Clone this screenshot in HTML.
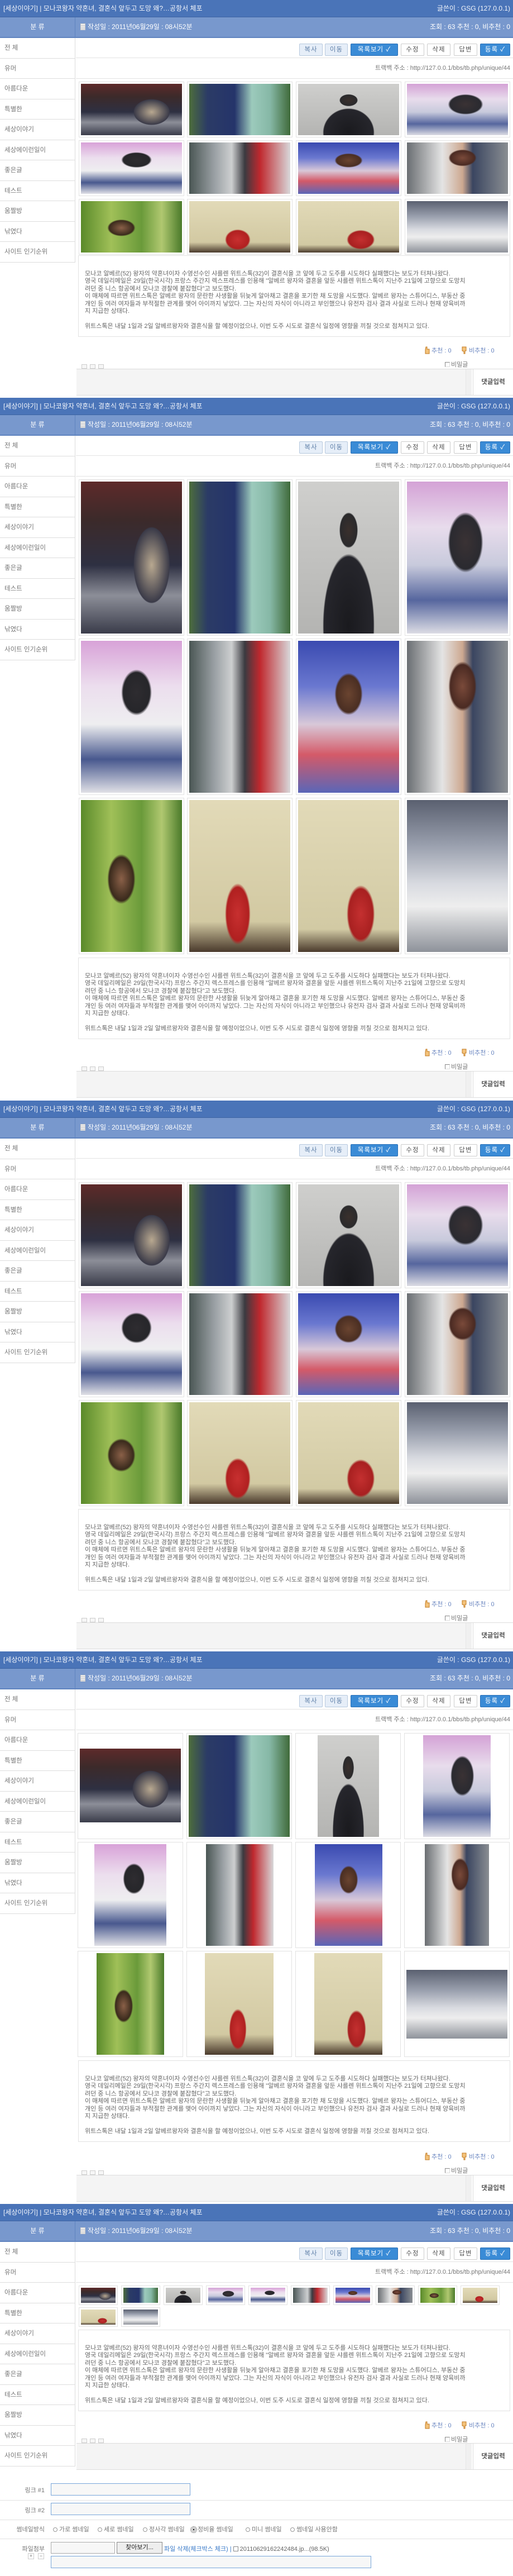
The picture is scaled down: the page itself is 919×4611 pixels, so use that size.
<!DOCTYPE html>
<html><head><meta charset="utf-8">
<style>
*{margin:0;padding:0;box-sizing:border-box}
body{width:919px;height:4611px;background:#fff;font-family:"Liberation Sans","Noto Sans CJK KR",sans-serif;overflow:hidden;position:relative}
.blk{position:absolute;left:0;width:919px}
.tt{position:absolute;left:0;top:0;width:919px;height:31px;background:#4a74b8;border-bottom:1px solid #3d64a3;color:#f2f5fb;font-size:12px;line-height:30px;padding:0 6px}
.tt .r{position:absolute;right:5px;top:0}
.sh{position:absolute;left:0;top:31px;width:919px;height:37px;background:#7898cd;border-bottom:2px solid #5f83bf;color:#fff;font-size:12px;line-height:35px}
.sh .sc{position:absolute;left:0;top:0;width:135px;text-align:center;border-right:1px solid #5f83bf;height:35px}
.sh .si{position:absolute;left:144px;top:0}
.sh .r{position:absolute;right:5px;top:0}
.doc{display:inline-block;width:9px;height:12px;background:#f3f3f3;border:1px solid #ccc;vertical-align:-2px;margin-right:4px;background-image:repeating-linear-gradient(#f3f3f3 0 2px,#bbb 2px 3px)}
.side{position:absolute;left:0;top:68px;width:135px;border-right:1px solid #ddd}
.side div{height:36.5px;border-bottom:1px solid #ddd;color:#777;font-size:11.5px;line-height:36px;padding-left:8px}
.btns{position:absolute;left:136px;top:68px;width:783px;height:36px;border-bottom:1px solid #e3e3e3}
.b{position:absolute;top:10px;height:22px;font-size:11.5px;line-height:20px;text-align:center;border:1px solid #ccc;background:#fff;color:#555;border-radius:2px;letter-spacing:1px}
.b.lb{background:#e6eef8;border-color:#b7c9de;color:#5f7fa8}
.b.bl{background:#3a8bd6;border-color:#2a70b6;color:#fff}
.tb{position:absolute;left:136px;top:104px;width:783px;height:37px;border-bottom:1px solid #e3e3e3;color:#777;font-size:11px;line-height:37px;text-align:right;padding-right:5px}
.bx{position:absolute;width:189px;border:1px solid #e2e2e2;background:#fff}
.bx i{position:absolute;left:3px;top:3px;right:3px;bottom:3px;display:block}
.sm{position:absolute;width:70px;height:35px;border:1px solid #e2e2e2;background:#fff}
.sm i{position:absolute;left:3px;top:3px;right:3px;bottom:3px;display:block}
.i1{background:radial-gradient(ellipse 25% 35% at 70% 55%,#b8a890 0%,#3a3a48 70%,transparent 72%),linear-gradient(180deg,#5e2a2a 0%,#3c2a2a 25%,#2e3042 55%,#8c8e98 75%,#3a3c4a 100%)}
.i2{background:linear-gradient(90deg,#4d6d3c 0%,#2b3b66 18%,#25346a 45%,#9ccabc 62%,#86b8a6 80%,#3f6a3a 100%)}
.i3{background:radial-gradient(ellipse 35% 65% at 50% 95%,#1a1a1e 0%,#26262c 70%,transparent 73%),radial-gradient(ellipse 14% 18% at 50% 32%,#3a302c 0%,#2a2a2c 60%,transparent 65%),linear-gradient(#cfcfcd,#b4b4b2)}
.i4{background:radial-gradient(ellipse 28% 32% at 58% 40%,#3a3234 0%,#2a2a30 55%,transparent 62%),linear-gradient(180deg,#d4a2d6 0%,#e8dcec 30%,#c8cadc 55%,#56669e 78%,#dcdce4 100%)}
.i5{background:radial-gradient(ellipse 24% 24% at 55% 34%,#2e2c30 0%,#26262a 55%,transparent 63%),linear-gradient(180deg,#d8a2d8 0%,#ecdeee 30%,#eeeef0 55%,#48588e 78%,#e0e0e6 100%)}
.i6{background:linear-gradient(90deg,#4a5654 0%,#9aa0a4 25%,#cdcfd0 42%,#3a3a40 55%,#c0282e 70%,#d8d8da 100%)}
.i7{background:radial-gradient(ellipse 22% 22% at 50% 35%,#6a4430 0%,#4a2e22 55%,transparent 63%),linear-gradient(180deg,#3a4ab0 0%,#6a78d0 30%,#d8c8d8 55%,#d45a68 75%,#5a66b8 100%)}
.i8{background:radial-gradient(ellipse 22% 26% at 55% 30%,#7a4a3a 0%,#4a2a22 55%,transparent 63%),linear-gradient(90deg,#6a6e72 0%,#e4e4e4 35%,#cda890 55%,#3a4560 65%,#8a8e92 100%)}
.i9{background:radial-gradient(ellipse 22% 26% at 40% 52%,#8a6048 0%,#3a2a1c 55%,transparent 63%),linear-gradient(90deg,#5a8a2a 0%,#a0c058 30%,#6a9a3a 60%,#b0c870 80%,#4a7a2a 100%)}
.i10{background:radial-gradient(ellipse 20% 32% at 48% 75%,#c83030 0%,#b02020 55%,transparent 63%),linear-gradient(180deg,#e2dab8,#d2c9a2 80%,#4a3a2c 100%)}
.i11{background:radial-gradient(ellipse 22% 30% at 62% 75%,#c43030 0%,#a82020 55%,transparent 63%),linear-gradient(180deg,#e2dab8,#d2caa4 85%,#4a3a2c 100%)}
.i12{background:linear-gradient(180deg,#5a6070 0%,#9aa0ae 30%,#d8dae0 55%,#eeeeee 70%,#8e929a 100%)}
.tx{position:absolute;left:140px;width:774px;height:146px;border:1px solid #e2e2e2;background:#fff;color:#666;font-size:11px;line-height:13.4px;padding:26px 0 0 11px;white-space:nowrap}
.rc{position:absolute;left:760px;font-size:11px;color:#6a86c0;white-space:nowrap}
.ar{position:absolute;left:146px;width:48px;height:8px}
.ar span{display:inline-block;width:10px;height:8px;border:1px solid #ccc;margin-right:5px;background:#f6f6f6}
.pw{position:absolute;left:797px;font-size:11px;color:#777}
.pw b{display:inline-block;width:9px;height:9px;border:1px solid #888;border-right-color:#ddd;border-bottom-color:#ddd;vertical-align:-1px;margin-right:2px}
.cm{position:absolute;left:137px;width:782px;height:48px;border-top:1px solid #ddd;border-bottom:1px solid #ddd}
.cm .ta{position:absolute;left:0;top:0;width:708px;height:46px;background:#f4f4f4;border-right:1px solid #ddd}
.cm .sb{position:absolute;left:697px;top:0;width:11px;height:46px;background:#f0f0f0;border-left:1px solid #e6e6e6}
.cm .go{position:absolute;left:710px;top:0;width:72px;height:46px;background:#fff;border-left:1px solid #ddd;font-size:11.5px;font-weight:bold;color:#555;text-align:center;line-height:46px}
.lbl{position:absolute;font-size:11px;color:#777;text-align:right;width:80px;left:0}
.in{position:absolute;border:1px solid #78a6da;background:#f7f7f7}
.hl{position:absolute;left:0;width:919px;height:1px;background:#e2e2e2}
.rd{position:absolute;font-size:11px;color:#777;white-space:nowrap}
.rd b{display:inline-block;width:8px;height:8px;border:1px solid #999;border-radius:50%;margin-right:3px;vertical-align:-1px}
</style></head><body>

<!-- ============ BLOCK 1 ============ -->
<div class="blk" style="top:0;height:712px">
<div class="tt">[세상이야기] | 모나코왕자 약혼녀, 결혼식 앞두고 도망 왜?…공항서 체포<span class="r">글쓴이 : GSG (127.0.0.1)</span></div>
<div class="sh"><div class="sc">분 류</div><div class="si"><i class="doc"></i>작성일 : 2011년06월29일 : 08시52분</div><div class="r">조회 : 63 추천 : 0, 비추천 : 0</div></div>
<div class="side"><div>전 체</div><div>유머</div><div>아름다운</div><div>특별한</div><div>세상이야기</div><div>세상에이런일이</div><div>좋은글</div><div>테스트</div><div>움짤방</div><div>낚였다</div><div>사이트 인기순위</div></div>
<div class="btns"><div class="b lb" style="left:400px;width:42px">복사</div><div class="b lb" style="left:446px;width:41px">이동</div><div class="b bl" style="left:492px;width:85px">목록보기 ✓</div><div class="b" style="left:582px;width:42px">수정</div><div class="b" style="left:629px;width:42px">삭제</div><div class="b" style="left:677px;width:42px">답변</div><div class="b bl" style="left:724px;width:54px">등록 ✓</div></div>
<div class="tb">트랙백 주소 : http://127.0.0.1/bbs/tb.php/unique/44</div>
<div class="bx" style="left:141px;top:146px;height:100px"><i class="i1"></i></div>
<div class="bx" style="left:335px;top:146px;height:100px"><i class="i2"></i></div>
<div class="bx" style="left:530px;top:146px;height:100px"><i class="i3"></i></div>
<div class="bx" style="left:725px;top:146px;height:100px"><i class="i4"></i></div>
<div class="bx" style="left:141px;top:251px;height:100px"><i class="i5"></i></div>
<div class="bx" style="left:335px;top:251px;height:100px"><i class="i6"></i></div>
<div class="bx" style="left:530px;top:251px;height:100px"><i class="i7"></i></div>
<div class="bx" style="left:725px;top:251px;height:100px"><i class="i8"></i></div>
<div class="bx" style="left:141px;top:356px;height:100px"><i class="i9"></i></div>
<div class="bx" style="left:335px;top:356px;height:100px"><i class="i10"></i></div>
<div class="bx" style="left:530px;top:356px;height:100px"><i class="i11"></i></div>
<div class="bx" style="left:725px;top:356px;height:100px"><i class="i12"></i></div>
<div class="tx" style="top:457px">모나코 알베르(52) 왕자의 약혼녀이자 수영선수인 샤를렌 위트스톡(32)이 결혼식을 코 앞에 두고 도주를 시도하다 실패했다는 보도가 터져나왔다.<br>영국 데일리메일은 29일(한국시각) 프랑스 주간지 렉스프레스를 인용해 "알베르 왕자와 결혼을 앞둔 샤를렌 위트스톡이 지난주 21일에 고향으로 도망치<br>려던 중 니스 항공에서 모나코 경찰에 붙잡혔다"고 보도했다.<br>이 매체에 따르면 위트스톡은 알베르 왕자의 문란한 사생활을 뒤늦게 알아채고 결혼을 포기한 채 도망을 시도했다. 알베르 왕자는 스튜어디스, 부동산 중<br>개인 등 여러 여자들과 부적절한 관계를 맺어 아이까지 낳았다. 그는 자신의 자식이 아니라고 부인했으나 유전자 검사 결과 사실로 드러나 현재 양육비까<br>지 지급한 상태다.<br><br>위트스톡은 내달 1일과 2일 알베르왕자와 결혼식을 할 예정이었으나, 이번 도주 시도로 결혼식 일정에 영향을 끼칠 것으로 점쳐지고 있다.</div>
<div class="rc" style="top:619px"><svg width="10" height="14" viewBox="0 0 10 14" style="vertical-align:-3px"><path d="M3 1 L5 1 L5 5 L9 5 L9 13 L2 13 L2 6 Z" fill="#f3c27a" stroke="#c07820"/></svg> 추천 : 0 &nbsp;&nbsp;&nbsp;&nbsp; <svg width="10" height="14" viewBox="0 0 10 14" style="vertical-align:-3px"><path d="M1 1 L8 1 L8 8 L6 8 L6 13 L4 13 L4 9 L1 8 Z" fill="#f3c27a" stroke="#c07820"/></svg> 비추천 : 0</div>
<div class="ar" style="top:647px"><span></span><span></span><span></span></div>
<div class="pw" style="top:644px"><b></b>비밀글</div>
<div class="cm" style="top:660px"><div class="ta"></div><div class="sb"></div><div class="go">댓글입력</div></div>
</div>

<!-- ============ BLOCK 2 ============ -->
<div class="blk" style="top:712px;height:1258px">
<div class="tt">[세상이야기] | 모나코왕자 약혼녀, 결혼식 앞두고 도망 왜?…공항서 체포<span class="r">글쓴이 : GSG (127.0.0.1)</span></div>
<div class="sh"><div class="sc">분 류</div><div class="si"><i class="doc"></i>작성일 : 2011년06월29일 : 08시52분</div><div class="r">조회 : 63 추천 : 0, 비추천 : 0</div></div>
<div class="side"><div>전 체</div><div>유머</div><div>아름다운</div><div>특별한</div><div>세상이야기</div><div>세상에이런일이</div><div>좋은글</div><div>테스트</div><div>움짤방</div><div>낚였다</div><div>사이트 인기순위</div></div>
<div class="btns"><div class="b lb" style="left:400px;width:42px">복사</div><div class="b lb" style="left:446px;width:41px">이동</div><div class="b bl" style="left:492px;width:85px">목록보기 ✓</div><div class="b" style="left:582px;width:42px">수정</div><div class="b" style="left:629px;width:42px">삭제</div><div class="b" style="left:677px;width:42px">답변</div><div class="b bl" style="left:724px;width:54px">등록 ✓</div></div>
<div class="tb">트랙백 주소 : http://127.0.0.1/bbs/tb.php/unique/44</div>
<div class="bx" style="left:141px;top:146px;height:280px"><i class="i1"></i></div>
<div class="bx" style="left:335px;top:146px;height:280px"><i class="i2"></i></div>
<div class="bx" style="left:530px;top:146px;height:280px"><i class="i3"></i></div>
<div class="bx" style="left:725px;top:146px;height:280px"><i class="i4"></i></div>
<div class="bx" style="left:141px;top:431px;height:280px"><i class="i5"></i></div>
<div class="bx" style="left:335px;top:431px;height:280px"><i class="i6"></i></div>
<div class="bx" style="left:530px;top:431px;height:280px"><i class="i7"></i></div>
<div class="bx" style="left:725px;top:431px;height:280px"><i class="i8"></i></div>
<div class="bx" style="left:141px;top:716px;height:280px"><i class="i9"></i></div>
<div class="bx" style="left:335px;top:716px;height:280px"><i class="i10"></i></div>
<div class="bx" style="left:530px;top:716px;height:280px"><i class="i11"></i></div>
<div class="bx" style="left:725px;top:716px;height:280px"><i class="i12"></i></div>
<div class="tx" style="top:1002px">모나코 알베르(52) 왕자의 약혼녀이자 수영선수인 샤를렌 위트스톡(32)이 결혼식을 코 앞에 두고 도주를 시도하다 실패했다는 보도가 터져나왔다.<br>영국 데일리메일은 29일(한국시각) 프랑스 주간지 렉스프레스를 인용해 "알베르 왕자와 결혼을 앞둔 샤를렌 위트스톡이 지난주 21일에 고향으로 도망치<br>려던 중 니스 항공에서 모나코 경찰에 붙잡혔다"고 보도했다.<br>이 매체에 따르면 위트스톡은 알베르 왕자의 문란한 사생활을 뒤늦게 알아채고 결혼을 포기한 채 도망을 시도했다. 알베르 왕자는 스튜어디스, 부동산 중<br>개인 등 여러 여자들과 부적절한 관계를 맺어 아이까지 낳았다. 그는 자신의 자식이 아니라고 부인했으나 유전자 검사 결과 사실로 드러나 현재 양육비까<br>지 지급한 상태다.<br><br>위트스톡은 내달 1일과 2일 알베르왕자와 결혼식을 할 예정이었으나, 이번 도주 시도로 결혼식 일정에 영향을 끼칠 것으로 점쳐지고 있다.</div>
<div class="rc" style="top:1164px"><svg width="10" height="14" viewBox="0 0 10 14" style="vertical-align:-3px"><path d="M3 1 L5 1 L5 5 L9 5 L9 13 L2 13 L2 6 Z" fill="#f3c27a" stroke="#c07820"/></svg> 추천 : 0 &nbsp;&nbsp;&nbsp;&nbsp; <svg width="10" height="14" viewBox="0 0 10 14" style="vertical-align:-3px"><path d="M1 1 L8 1 L8 8 L6 8 L6 13 L4 13 L4 9 L1 8 Z" fill="#f3c27a" stroke="#c07820"/></svg> 비추천 : 0</div>
<div class="ar" style="top:1192px"><span></span><span></span><span></span></div>
<div class="pw" style="top:1189px"><b></b>비밀글</div>
<div class="cm" style="top:1205px"><div class="ta"></div><div class="sb"></div><div class="go">댓글입력</div></div>
</div>

<!-- ============ BLOCK 3 ============ -->
<div class="blk" style="top:1970px;height:986px">
<div class="tt">[세상이야기] | 모나코왕자 약혼녀, 결혼식 앞두고 도망 왜?…공항서 체포<span class="r">글쓴이 : GSG (127.0.0.1)</span></div>
<div class="sh"><div class="sc">분 류</div><div class="si"><i class="doc"></i>작성일 : 2011년06월29일 : 08시52분</div><div class="r">조회 : 63 추천 : 0, 비추천 : 0</div></div>
<div class="side"><div>전 체</div><div>유머</div><div>아름다운</div><div>특별한</div><div>세상이야기</div><div>세상에이런일이</div><div>좋은글</div><div>테스트</div><div>움짤방</div><div>낚였다</div><div>사이트 인기순위</div></div>
<div class="btns"><div class="b lb" style="left:400px;width:42px">복사</div><div class="b lb" style="left:446px;width:41px">이동</div><div class="b bl" style="left:492px;width:85px">목록보기 ✓</div><div class="b" style="left:582px;width:42px">수정</div><div class="b" style="left:629px;width:42px">삭제</div><div class="b" style="left:677px;width:42px">답변</div><div class="b bl" style="left:724px;width:54px">등록 ✓</div></div>
<div class="tb">트랙백 주소 : http://127.0.0.1/bbs/tb.php/unique/44</div>
<div class="bx" style="left:141px;top:146px;height:190px"><i class="i1"></i></div>
<div class="bx" style="left:335px;top:146px;height:190px"><i class="i2"></i></div>
<div class="bx" style="left:530px;top:146px;height:190px"><i class="i3"></i></div>
<div class="bx" style="left:725px;top:146px;height:190px"><i class="i4"></i></div>
<div class="bx" style="left:141px;top:341px;height:190px"><i class="i5"></i></div>
<div class="bx" style="left:335px;top:341px;height:190px"><i class="i6"></i></div>
<div class="bx" style="left:530px;top:341px;height:190px"><i class="i7"></i></div>
<div class="bx" style="left:725px;top:341px;height:190px"><i class="i8"></i></div>
<div class="bx" style="left:141px;top:536px;height:190px"><i class="i9"></i></div>
<div class="bx" style="left:335px;top:536px;height:190px"><i class="i10"></i></div>
<div class="bx" style="left:530px;top:536px;height:190px"><i class="i11"></i></div>
<div class="bx" style="left:725px;top:536px;height:190px"><i class="i12"></i></div>
<div class="tx" style="top:731px">모나코 알베르(52) 왕자의 약혼녀이자 수영선수인 샤를렌 위트스톡(32)이 결혼식을 코 앞에 두고 도주를 시도하다 실패했다는 보도가 터져나왔다.<br>영국 데일리메일은 29일(한국시각) 프랑스 주간지 렉스프레스를 인용해 "알베르 왕자와 결혼을 앞둔 샤를렌 위트스톡이 지난주 21일에 고향으로 도망치<br>려던 중 니스 항공에서 모나코 경찰에 붙잡혔다"고 보도했다.<br>이 매체에 따르면 위트스톡은 알베르 왕자의 문란한 사생활을 뒤늦게 알아채고 결혼을 포기한 채 도망을 시도했다. 알베르 왕자는 스튜어디스, 부동산 중<br>개인 등 여러 여자들과 부적절한 관계를 맺어 아이까지 낳았다. 그는 자신의 자식이 아니라고 부인했으나 유전자 검사 결과 사실로 드러나 현재 양육비까<br>지 지급한 상태다.<br><br>위트스톡은 내달 1일과 2일 알베르왕자와 결혼식을 할 예정이었으나, 이번 도주 시도로 결혼식 일정에 영향을 끼칠 것으로 점쳐지고 있다.</div>
<div class="rc" style="top:893px"><svg width="10" height="14" viewBox="0 0 10 14" style="vertical-align:-3px"><path d="M3 1 L5 1 L5 5 L9 5 L9 13 L2 13 L2 6 Z" fill="#f3c27a" stroke="#c07820"/></svg> 추천 : 0 &nbsp;&nbsp;&nbsp;&nbsp; <svg width="10" height="14" viewBox="0 0 10 14" style="vertical-align:-3px"><path d="M1 1 L8 1 L8 8 L6 8 L6 13 L4 13 L4 9 L1 8 Z" fill="#f3c27a" stroke="#c07820"/></svg> 비추천 : 0</div>
<div class="ar" style="top:921px"><span></span><span></span><span></span></div>
<div class="pw" style="top:918px"><b></b>비밀글</div>
<div class="cm" style="top:934px"><div class="ta"></div><div class="sb"></div><div class="go">댓글입력</div></div>
</div>

<!-- ============ BLOCK 4 ============ -->
<div class="blk" style="top:2956px;height:989px">
<div class="tt">[세상이야기] | 모나코왕자 약혼녀, 결혼식 앞두고 도망 왜?…공항서 체포<span class="r">글쓴이 : GSG (127.0.0.1)</span></div>
<div class="sh"><div class="sc">분 류</div><div class="si"><i class="doc"></i>작성일 : 2011년06월29일 : 08시52분</div><div class="r">조회 : 63 추천 : 0, 비추천 : 0</div></div>
<div class="side"><div>전 체</div><div>유머</div><div>아름다운</div><div>특별한</div><div>세상이야기</div><div>세상에이런일이</div><div>좋은글</div><div>테스트</div><div>움짤방</div><div>낚였다</div><div>사이트 인기순위</div></div>
<div class="btns"><div class="b lb" style="left:400px;width:42px">복사</div><div class="b lb" style="left:446px;width:41px">이동</div><div class="b bl" style="left:492px;width:85px">목록보기 ✓</div><div class="b" style="left:582px;width:42px">수정</div><div class="b" style="left:629px;width:42px">삭제</div><div class="b" style="left:677px;width:42px">답변</div><div class="b bl" style="left:724px;width:54px">등록 ✓</div></div>
<div class="tb">트랙백 주소 : http://127.0.0.1/bbs/tb.php/unique/44</div>
<div class="bx" style="left:139px;top:146px;height:190px"><i class="i1" style="top:27px;bottom:auto;height:132px"></i></div>
<div class="bx" style="left:334px;top:146px;height:190px"><i class="i2"></i></div>
<div class="bx" style="left:529px;top:146px;height:190px"><i class="i3" style="left:39px;right:auto;width:110px"></i></div>
<div class="bx" style="left:724px;top:146px;height:190px"><i class="i4" style="left:33px;right:auto;width:121px"></i></div>
<div class="bx" style="left:139px;top:341px;height:190px"><i class="i5" style="left:29px;right:auto;width:129px"></i></div>
<div class="bx" style="left:334px;top:341px;height:190px"><i class="i6" style="left:34px;right:auto;width:121px"></i></div>
<div class="bx" style="left:529px;top:341px;height:190px"><i class="i7" style="left:34px;right:auto;width:121px"></i></div>
<div class="bx" style="left:724px;top:341px;height:190px"><i class="i8" style="left:36px;right:auto;width:115px"></i></div>
<div class="bx" style="left:139px;top:536px;height:190px"><i class="i9" style="left:33px;right:auto;width:121px"></i></div>
<div class="bx" style="left:334px;top:536px;height:190px"><i class="i10" style="left:32px;right:auto;width:123px"></i></div>
<div class="bx" style="left:529px;top:536px;height:190px"><i class="i11" style="left:33px;right:auto;width:122px"></i></div>
<div class="bx" style="left:724px;top:536px;height:190px"><i class="i12" style="top:33px;bottom:auto;height:123px"></i></div>
<div class="tx" style="top:732px">모나코 알베르(52) 왕자의 약혼녀이자 수영선수인 샤를렌 위트스톡(32)이 결혼식을 코 앞에 두고 도주를 시도하다 실패했다는 보도가 터져나왔다.<br>영국 데일리메일은 29일(한국시각) 프랑스 주간지 렉스프레스를 인용해 "알베르 왕자와 결혼을 앞둔 샤를렌 위트스톡이 지난주 21일에 고향으로 도망치<br>려던 중 니스 항공에서 모나코 경찰에 붙잡혔다"고 보도했다.<br>이 매체에 따르면 위트스톡은 알베르 왕자의 문란한 사생활을 뒤늦게 알아채고 결혼을 포기한 채 도망을 시도했다. 알베르 왕자는 스튜어디스, 부동산 중<br>개인 등 여러 여자들과 부적절한 관계를 맺어 아이까지 낳았다. 그는 자신의 자식이 아니라고 부인했으나 유전자 검사 결과 사실로 드러나 현재 양육비까<br>지 지급한 상태다.<br><br>위트스톡은 내달 1일과 2일 알베르왕자와 결혼식을 할 예정이었으나, 이번 도주 시도로 결혼식 일정에 영향을 끼칠 것으로 점쳐지고 있다.</div>
<div class="rc" style="top:896px"><svg width="10" height="14" viewBox="0 0 10 14" style="vertical-align:-3px"><path d="M3 1 L5 1 L5 5 L9 5 L9 13 L2 13 L2 6 Z" fill="#f3c27a" stroke="#c07820"/></svg> 추천 : 0 &nbsp;&nbsp;&nbsp;&nbsp; <svg width="10" height="14" viewBox="0 0 10 14" style="vertical-align:-3px"><path d="M1 1 L8 1 L8 8 L6 8 L6 13 L4 13 L4 9 L1 8 Z" fill="#f3c27a" stroke="#c07820"/></svg> 비추천 : 0</div>
<div class="ar" style="top:924px"><span></span><span></span><span></span></div>
<div class="pw" style="top:921px"><b></b>비밀글</div>
<div class="cm" style="top:937px"><div class="ta"></div><div class="sb"></div><div class="go">댓글입력</div></div>
</div>

<!-- ============ BLOCK 5 ============ -->
<div class="blk" style="top:3945px;height:480px">
<div class="tt">[세상이야기] | 모나코왕자 약혼녀, 결혼식 앞두고 도망 왜?…공항서 체포<span class="r">글쓴이 : GSG (127.0.0.1)</span></div>
<div class="sh"><div class="sc">분 류</div><div class="si"><i class="doc"></i>작성일 : 2011년06월29일 : 08시52분</div><div class="r">조회 : 63 추천 : 0, 비추천 : 0</div></div>
<div class="side"><div>전 체</div><div>유머</div><div>아름다운</div><div>특별한</div><div>세상이야기</div><div>세상에이런일이</div><div>좋은글</div><div>테스트</div><div>움짤방</div><div>낚였다</div><div>사이트 인기순위</div></div>
<div class="btns"><div class="b lb" style="left:400px;width:42px">복사</div><div class="b lb" style="left:446px;width:41px">이동</div><div class="b bl" style="left:492px;width:85px">목록보기 ✓</div><div class="b" style="left:582px;width:42px">수정</div><div class="b" style="left:629px;width:42px">삭제</div><div class="b" style="left:677px;width:42px">답변</div><div class="b bl" style="left:724px;width:54px">등록 ✓</div></div>
<div class="tb">트랙백 주소 : http://127.0.0.1/bbs/tb.php/unique/44</div>
<div class="sm" style="left:141px;top:146px"><i class="i1"></i></div>
<div class="sm" style="left:217px;top:146px"><i class="i2"></i></div>
<div class="sm" style="left:293px;top:146px"><i class="i3"></i></div>
<div class="sm" style="left:369px;top:146px"><i class="i4"></i></div>
<div class="sm" style="left:445px;top:146px"><i class="i5"></i></div>
<div class="sm" style="left:521px;top:146px"><i class="i6"></i></div>
<div class="sm" style="left:597px;top:146px"><i class="i7"></i></div>
<div class="sm" style="left:673px;top:146px"><i class="i8"></i></div>
<div class="sm" style="left:749px;top:146px"><i class="i9"></i></div>
<div class="sm" style="left:825px;top:146px"><i class="i10"></i></div>
<div class="sm" style="left:141px;top:185px"><i class="i11"></i></div>
<div class="sm" style="left:217px;top:185px"><i class="i12"></i></div>
<div class="tx" style="top:225px">모나코 알베르(52) 왕자의 약혼녀이자 수영선수인 샤를렌 위트스톡(32)이 결혼식을 코 앞에 두고 도주를 시도하다 실패했다는 보도가 터져나왔다.<br>영국 데일리메일은 29일(한국시각) 프랑스 주간지 렉스프레스를 인용해 "알베르 왕자와 결혼을 앞둔 샤를렌 위트스톡이 지난주 21일에 고향으로 도망치<br>려던 중 니스 항공에서 모나코 경찰에 붙잡혔다"고 보도했다.<br>이 매체에 따르면 위트스톡은 알베르 왕자의 문란한 사생활을 뒤늦게 알아채고 결혼을 포기한 채 도망을 시도했다. 알베르 왕자는 스튜어디스, 부동산 중<br>개인 등 여러 여자들과 부적절한 관계를 맺어 아이까지 낳았다. 그는 자신의 자식이 아니라고 부인했으나 유전자 검사 결과 사실로 드러나 현재 양육비까<br>지 지급한 상태다.<br><br>위트스톡은 내달 1일과 2일 알베르왕자와 결혼식을 할 예정이었으나, 이번 도주 시도로 결혼식 일정에 영향을 끼칠 것으로 점쳐지고 있다.</div>
<div class="rc" style="top:388px"><svg width="10" height="14" viewBox="0 0 10 14" style="vertical-align:-3px"><path d="M3 1 L5 1 L5 5 L9 5 L9 13 L2 13 L2 6 Z" fill="#f3c27a" stroke="#c07820"/></svg> 추천 : 0 &nbsp;&nbsp;&nbsp;&nbsp; <svg width="10" height="14" viewBox="0 0 10 14" style="vertical-align:-3px"><path d="M1 1 L8 1 L8 8 L6 8 L6 13 L4 13 L4 9 L1 8 Z" fill="#f3c27a" stroke="#c07820"/></svg> 비추천 : 0</div>
<div class="ar" style="top:415px"><span></span><span></span><span></span></div>
<div class="pw" style="top:413px"><b></b>비밀글</div>
<div class="cm" style="top:428px"><div class="ta"></div><div class="sb"></div><div class="go">댓글입력</div></div>
</div>

<!-- ============ FOOTER FORM ============ -->
<div class="lbl" style="top:4449px">링크 #1</div>
<div class="in" style="left:91px;top:4445px;width:250px;height:22px"></div>
<div class="hl" style="top:4475px"></div>
<div class="lbl" style="top:4485px">링크 #2</div>
<div class="in" style="left:91px;top:4480px;width:250px;height:22px"></div>
<div class="hl" style="top:4510px"></div>
<div class="lbl" style="top:4519px">썸네일방식</div>
<div class="rd" style="left:95px;top:4519px"><b></b>가로 썸네일</div>
<div class="rd" style="left:175px;top:4519px"><b></b>세로 썸네일</div>
<div class="rd" style="left:256px;top:4519px"><b></b>정사각 썸네일</div>
<div class="rd" style="left:343px;top:4519px"><b style="background:radial-gradient(#222 30%,#fff 40%);outline:1px dotted #333;outline-offset:1px"></b>정비율 썸네일</div>
<div class="rd" style="left:440px;top:4519px"><b></b>미니 썸네일</div>
<div class="rd" style="left:520px;top:4519px"><b></b>썸네일 사용안함</div>
<div class="hl" style="top:4544px"></div>
<div class="lbl" style="top:4554px">파일첨부</div>
<div style="position:absolute;left:50px;top:4570px;width:11px;height:11px;border:1px solid #ccc;font-size:9px;line-height:9px;text-align:center;color:#777">+</div>
<div style="position:absolute;left:68px;top:4570px;width:11px;height:11px;border:1px solid #ccc;font-size:9px;line-height:9px;text-align:center;color:#777">−</div>
<div style="position:absolute;left:91px;top:4550px;width:115px;height:21px;border:1px solid #aaa;background:#f7f7f7"></div>
<div style="position:absolute;left:209px;top:4550px;width:82px;height:21px;border:1px solid #888;background:#eee;font-size:11px;line-height:19px;text-align:center;color:#222">찾아보기...</div>
<div style="position:absolute;left:294px;top:4554px;font-size:11px;color:#3a7ac8;white-space:nowrap">파일 삭제(체크박스 체크) | <span style="color:#666"><b style="display:inline-block;width:9px;height:9px;border:1px solid #888;vertical-align:-1px"></b> 20110629162242484.jp...(98.5K)</span></div>
<div class="in" style="left:91px;top:4575px;width:574px;height:22px"></div>

</body></html>
